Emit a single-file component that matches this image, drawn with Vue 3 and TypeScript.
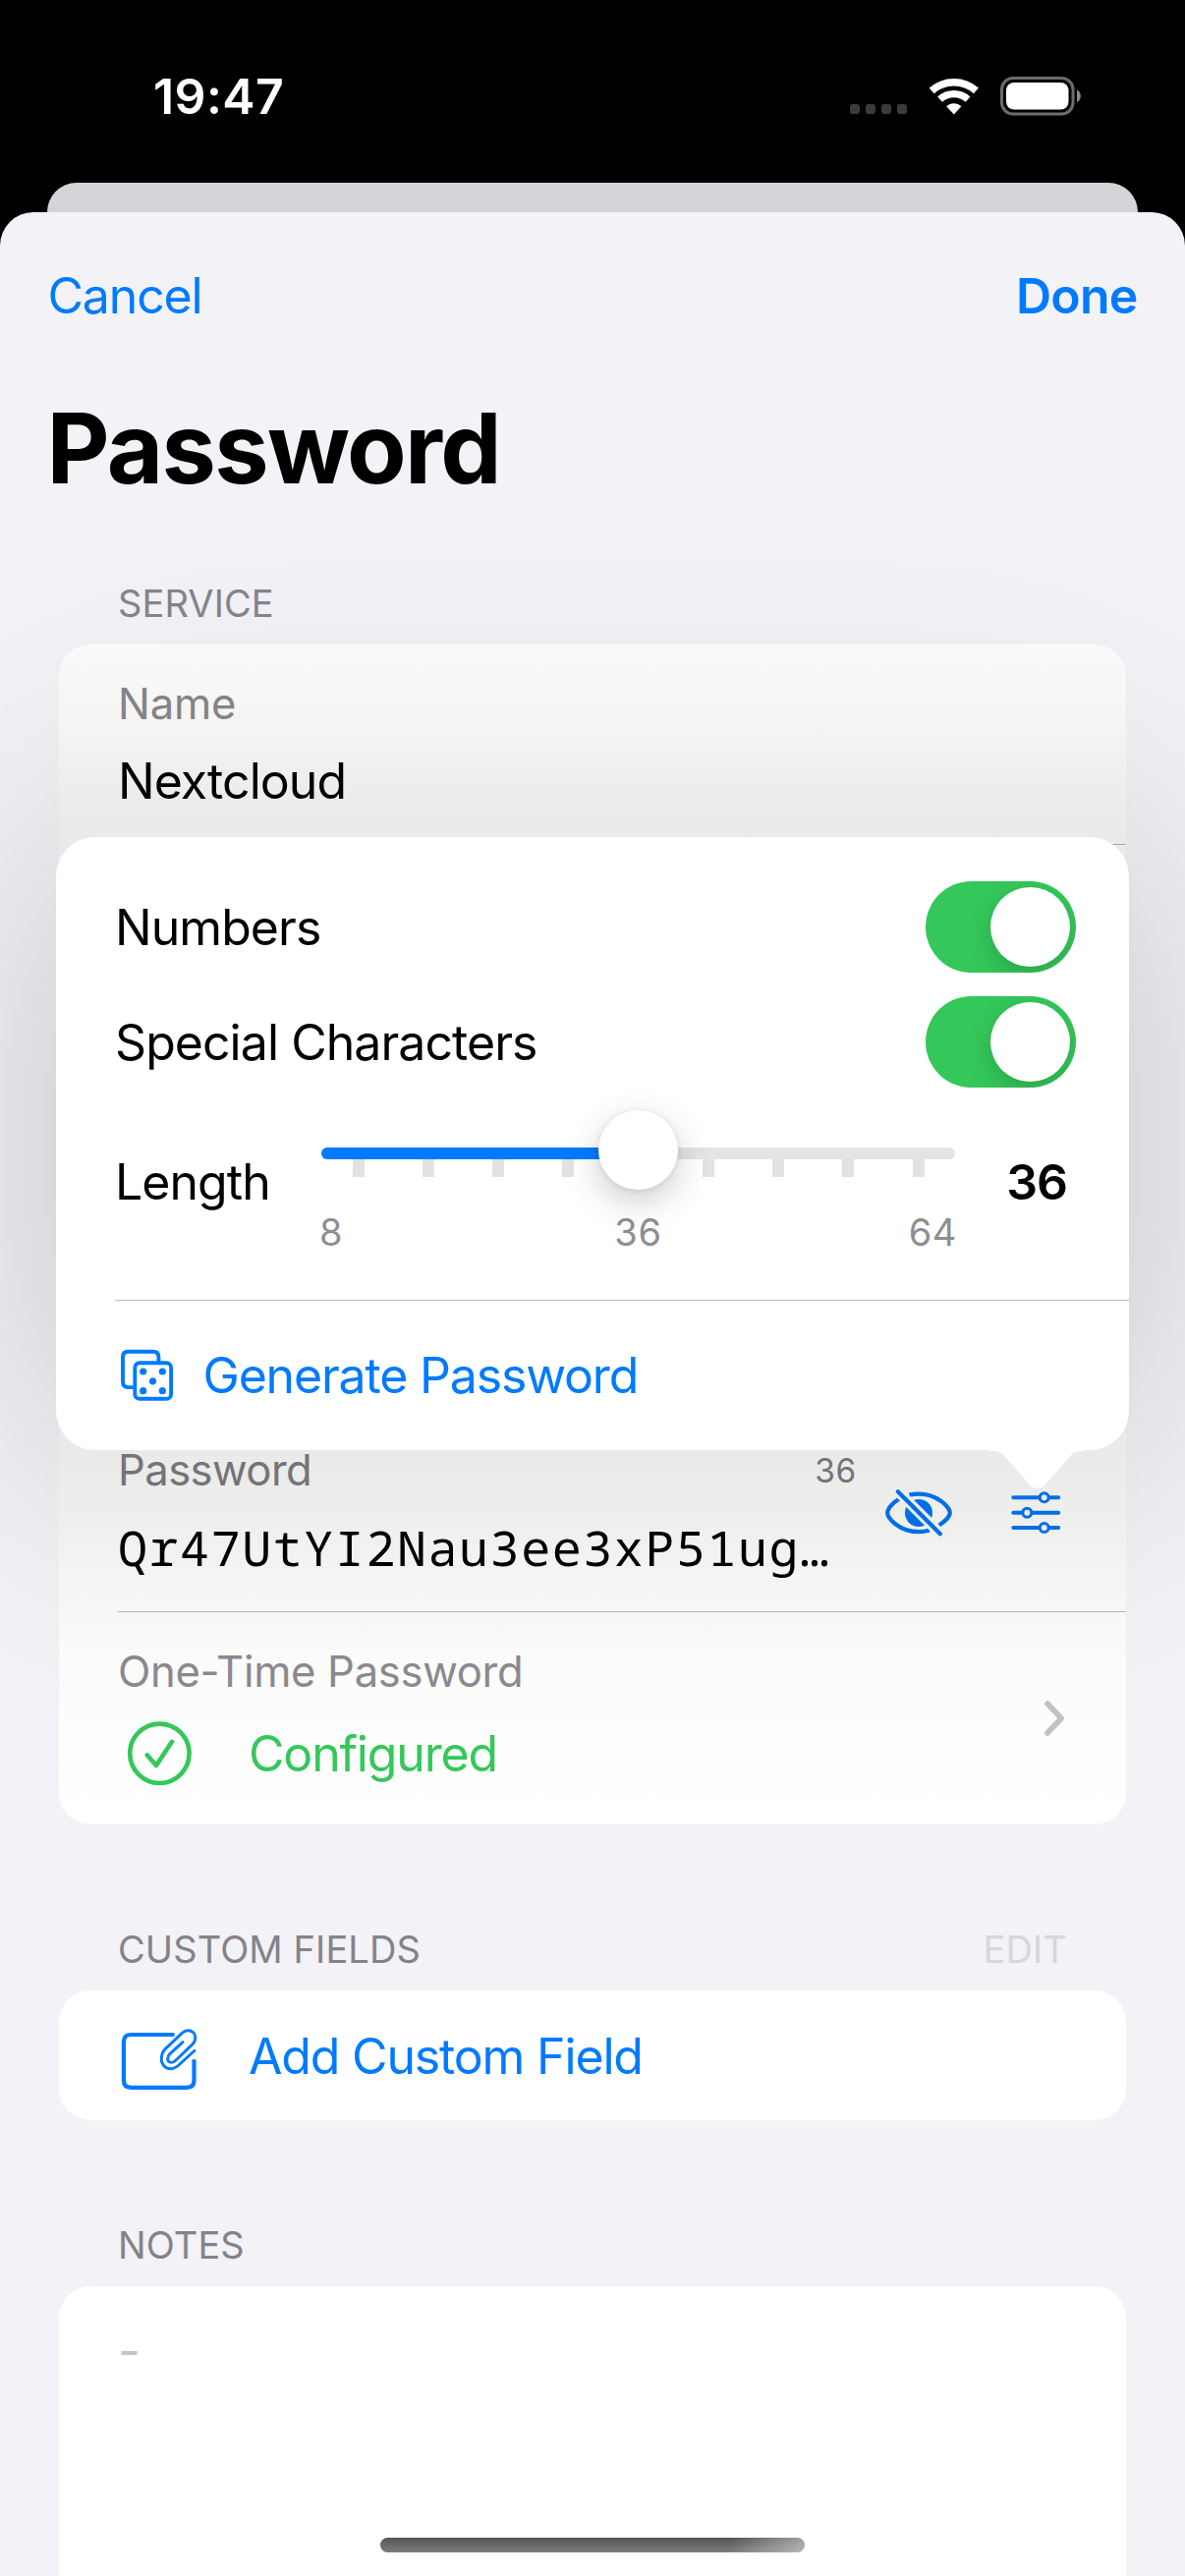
<script setup lang="ts">
import { ref } from 'vue'

const time = '19:47'
const minLength = 8
const maxLength = 64
const length = ref(36)
const options = ['Numbers', 'Special Characters']
const ticks = [32, 103, 174, 245, 388, 459, 530, 602]
const signalDots = [3, 19, 35, 51]
const pips = [
  [28.7, 24],
  [48.3, 24],
  [38.5, 33.8],
  [28.7, 43.7],
  [48.3, 43.7],
]
</script>

<template>
  <div class="screen">
    <header class="status">
      <span class="clock">{{ time }}</span>
      <svg width="240" height="40" viewBox="0 0 240 40">
        <rect v-for="x in signalDots" :key="x" :x="x" y="28" width="10" height="10" rx="3" fill="#3b3b3b" />
        <g fill="none" stroke="#fff">
          <path d="M86.2 14.4A34 34 0 0 1 131.4 14.4" stroke-width="7.6" />
          <path d="M94.6 23.2A21 21 0 0 1 123 23.2" stroke-width="7.2" />
        </g>
        <path d="M108.8 38.4L101.2 30.2C105.4 26.2 112.2 26.2 116.4 30.2Z" fill="#fff" />
        <rect x="157.5" y="1.5" width="72.5" height="36.5" rx="11.5" fill="none" stroke="#6c6c6c" stroke-width="3" />
        <rect x="162" y="6" width="63.5" height="27.5" rx="8" fill="#fff" />
        <path d="M234 13.5C239 15.5 239 24 234 26Z" fill="#8a8a8a" />
      </svg>
    </header>
    <div class="sheet-behind"></div>

    <main class="sheet">
      <div class="shade"></div>
      <nav class="nav">
        <span class="cancel">Cancel</span>
        <span class="done">Done</span>
      </nav>
      <h1 class="title">Password</h1>

      <div class="head head-first"><span>SERVICE</span></div>
      <section class="card service">
        <div class="row name-row">
          <span class="label l-name">Name</span>
          <span class="value v-name">Nextcloud</span>
        </div>
        <div class="covered"></div>
        <div class="row pass-row">
          <div class="pass-main">
            <div class="pass-top">
              <span class="label l-pass">Password</span>
              <span class="count">{{ length }}</span>
            </div>
            <span class="mono">Qr47UtYI2Nau3ee3xP51ug…</span>
          </div>
          <svg class="eye" width="76" height="52" viewBox="0 0 76 52">
            <g fill="none" stroke="#006fe6" stroke-width="4.2">
              <path d="M22.6 9.6C11.5 14.2 6.2 22 6.2 26C6.2 31 18 45.2 38 45.2C42 45.2 45.6 44.6 49 43.6" />
              <path d="M28.4 7.6C31.4 6.9 34.6 6.6 38 6.6C58 6.6 69.8 21 69.8 26C69.8 29 65.6 34 58.8 38.4" />
            </g>
            <circle cx="38" cy="26" r="14" fill="#006fe6" />
            <path d="M13.4 0.6L62.8 50" stroke="#eeeeed" stroke-width="10.6" />
            <path d="M16.8 4.2L59.8 47.2" stroke="#006fe6" stroke-width="4.2" stroke-linecap="round" />
          </svg>
          <svg class="tuner" width="54" height="44" viewBox="0 0 54 44" fill="none" stroke="#006fe6" stroke-linecap="round">
            <path d="M4.3 6.3H50.2M4.3 21.7H50.2M4.3 37H50.2" stroke-width="4" />
            <g fill="#ededec" stroke-width="3.1">
              <circle cx="35.7" cy="6.3" r="4.5" />
              <circle cx="18.3" cy="21.7" r="4.5" />
              <circle cx="35.7" cy="37" r="4.5" />
            </g>
          </svg>
        </div>
        <div class="row otp-row">
          <div class="otp-main">
            <span class="label l-otp">One-Time Password</span>
            <div class="otp-state">
              <svg width="66" height="66" viewBox="0 0 66 66" fill="none" stroke="#34c759" stroke-width="4.6" stroke-linecap="round" stroke-linejoin="round">
                <circle cx="33.4" cy="32.8" r="30.2" />
                <path d="M20.8 34.4L30 45L46 20.8" />
              </svg>
              <span class="action">Configured</span>
            </div>
          </div>
          <svg class="chevron" width="22" height="38" viewBox="0 0 22 38" fill="none" stroke="#c2c2c4" stroke-width="5.6" stroke-linecap="round" stroke-linejoin="round">
            <path d="M4 4L18.2 19L4 34" />
          </svg>
        </div>
      </section>

      <div class="head">
        <span>CUSTOM FIELDS</span>
        <span class="edit">EDIT</span>
      </div>
      <section class="card add">
        <svg width="82" height="70" viewBox="0 0 82 70" fill="none" stroke="#007aff" stroke-width="4.2">
          <path d="M57.5 13H13.4Q5.9 13 5.9 20.4V59.6Q5.9 66.9 13.4 66.9H70Q77.5 66.9 77.5 59.6V38.2" />
          <path
            d="M78 29.2L62.7 43.2C60 45.8 57.2 47.6 53.8 47.8C48.6 48 44.3 43.4 44.3 38.2C44.3 34 45.2 30.4 48.4 27.4L65 11.6C67 9.7 69 8.8 71.5 8.8C75.6 8.8 78.8 11.8 78.8 15.8C78.8 18.8 77.8 21 75.8 22.9L59 39C57.4 40.6 56 41.4 54.2 41.4C52 41.4 50.6 39.8 50.6 37.8C50.6 35.8 51.4 34 52.8 32.6L66 20.6"
            stroke-width="2.9"
            stroke-linecap="round"
          />
        </svg>
        <span class="action">Add Custom Field</span>
      </section>

      <div class="head"><span>NOTES</span></div>
      <section class="card notes"><span class="placeholder">-</span></section>

      <div class="popover">
        <div class="options">
          <div v-for="o in options" :key="o" class="option">
            <span class="value">{{ o }}</span>
            <span class="toggle"><i></i></span>
          </div>
        </div>
        <div class="length-row">
          <span class="value t-length">Length</span>
          <div class="slider">
            <div class="track">
              <div class="fill"></div>
              <i v-for="t in ticks" :key="t" class="tick" :style="{ left: t + 'px' }"></i>
              <b class="knob"></b>
            </div>
            <div class="scale">
              <span>{{ minLength }}</span><span>{{ length }}</span><span>{{ maxLength }}</span>
            </div>
          </div>
          <span class="current">{{ length }}</span>
        </div>
        <div class="generate">
          <svg width="64" height="56" viewBox="0 0 64 56" fill="none" stroke="#007aff" stroke-width="3.9">
            <path d="M18.6 40.1H13.4Q8 40.1 8 34.6V9.2Q8 3.7 13.4 3.7H39Q44.4 3.7 44.4 9.2V14" />
            <rect x="20.3" y="15.3" width="36.8" height="36.4" rx="4.8" />
            <circle v-for="([x, y], i) in pips" :key="i" :cx="x" :cy="y" r="3.6" fill="#007aff" stroke="none" />
          </svg>
          <span class="action">Generate Password</span>
        </div>
        <svg class="arrow" width="100" height="40" viewBox="0 0 100 40">
          <path d="M0 0V1H2C10 1 12 1.5 16 5.7L42.4 35.7C46 39.7 53.4 39.7 57 35.7L83.4 5.7C87 1.8 90 1 98 1V0Z" fill="#fff" />
        </svg>
      </div>
    </main>
    <div class="home"></div>
  </div>
</template>

<style>
html,
body {
  margin: 0;
  background: #000;
}
</style>

<style scoped>
.screen {
  position: relative;
  width: 1206px;
  height: 2622px;
  overflow: hidden;
  background: #000;
  color: #000;
  font-family: Inter, 'Liberation Sans', sans-serif;
  font-size: 50px;
  line-height: 60px;
  white-space: nowrap;
}
.status {
  box-sizing: border-box;
  height: 186px;
  padding: 10px 104px 0 156px;
  display: flex;
  align-items: center;
  justify-content: space-between;
  color: #fff;
}
.clock {
  font-weight: 600;
  letter-spacing: 0.41px;
}
.sheet-behind {
  height: 30px;
  margin: 0 48px;
  border-radius: 31px 31px 0 0;
  background: #d5d4d9;
}
.sheet {
  position: relative;
  height: 2406px;
  overflow: hidden;
  border-radius: 34px 34px 0 0;
  background: #f2f2f7;
  display: flex;
  flex-direction: column;
}
/* Wide, soft shadow of the popover: the two gradients multiply into a blurred rectangle. */
.shade {
  position: absolute;
  left: 0;
  top: 186px;
  width: 1206px;
  height: 1524px;
  background: linear-gradient(
    to right,
    rgba(0, 0, 0, 0.069) 0,
    rgba(0, 0, 0, 0.1) 57px,
    rgba(0, 0, 0, 0.138) 130px,
    rgba(0, 0, 0, 0.168) 200px,
    rgba(0, 0, 0, 0.19) 300px,
    rgba(0, 0, 0, 0.2) 450px,
    rgba(0, 0, 0, 0.2) 756px,
    rgba(0, 0, 0, 0.19) 906px,
    rgba(0, 0, 0, 0.168) 1006px,
    rgba(0, 0, 0, 0.138) 1076px,
    rgba(0, 0, 0, 0.1) 1149px,
    rgba(0, 0, 0, 0.069) 1206px
  );
  -webkit-mask-image: linear-gradient(
    rgba(0, 0, 0, 0) 0,
    rgba(0, 0, 0, 0.005) 75px,
    rgba(0, 0, 0, 0.019) 150px,
    rgba(0, 0, 0, 0.06) 225px,
    rgba(0, 0, 0, 0.15) 300px,
    rgba(0, 0, 0, 0.302) 375px,
    rgba(0, 0, 0, 0.5) 450px,
    rgba(0, 0, 0, 0.698) 525px,
    rgba(0, 0, 0, 0.849) 600px,
    rgba(0, 0, 0, 0.935) 675px,
    rgba(0, 0, 0, 0.968) 762px,
    rgba(0, 0, 0, 0.935) 849px,
    rgba(0, 0, 0, 0.849) 924px,
    rgba(0, 0, 0, 0.698) 999px,
    rgba(0, 0, 0, 0.5) 1074px,
    rgba(0, 0, 0, 0.302) 1149px,
    rgba(0, 0, 0, 0.15) 1224px,
    rgba(0, 0, 0, 0.06) 1299px,
    rgba(0, 0, 0, 0.019) 1374px,
    rgba(0, 0, 0, 0.005) 1449px,
    rgba(0, 0, 0, 0) 1524px
  );
}
.value {
  letter-spacing: -0.95px;
}
.action {
  letter-spacing: -1.17px;
}
.nav {
  position: relative;
  height: 170px;
  padding: 0 48.5px;
  display: flex;
  align-items: center;
  justify-content: space-between;
  color: #007aff;
}
.cancel {
  letter-spacing: -1.17px;
}
.done {
  font-weight: 600;
  letter-spacing: -0.8px;
}
.title {
  position: relative;
  margin: 10px 0 0 47.5px;
  font-size: 99px;
  line-height: 120px;
  font-weight: 700;
  letter-spacing: -1.7px;
}
.head {
  position: relative;
  height: 84px;
  margin: 85px 120px 0;
  display: flex;
  align-items: center;
  justify-content: space-between;
  font-size: 38px;
  letter-spacing: 0.1px;
  color: #848388;
}
.head-first {
  margin-top: 56px;
}
.edit {
  color: #d7d6dc;
}
.card {
  position: relative;
  box-sizing: border-box;
  margin: 0 60px;
  border-radius: 32px;
  background: #fff;
}
.service {
  height: 1201px;
  display: flex;
  flex-direction: column;
  background: linear-gradient(#fafafa 0, #f5f5f3 71px, #f0f0ef 121px, #edecea 157px, #eaeae8 196px, #eaeae8 820px, #eeeeed 884px, #f3f3f2 938px, #f7f7f6 984px, #fbfbfa 1034px, #fdfdfd 1104px, #fff 1201px);
}
.row {
  box-sizing: border-box;
  margin-left: 60px;
}
.name-row {
  height: 204px;
  padding-top: 31px;
  display: flex;
  flex-direction: column;
  border-bottom: 1px solid #a5a5a8;
}
.label {
  font-size: 43.6px;
  color: #848387;
}
.l-name {
  letter-spacing: -0.17px;
}
.v-name {
  margin-top: 18px;
}
.covered {
  height: 600px;
}
.pass-row {
  height: 181px;
  display: flex;
  border-bottom: 1px solid #b5b5b7;
}
.pass-main {
  width: 752px;
  display: flex;
  flex-direction: column;
}
.pass-top {
  height: 74px;
  display: flex;
  align-items: center;
  justify-content: space-between;
}
.l-pass {
  color: #747477;
  letter-spacing: -0.58px;
}
.count {
  font-size: 33.5px;
  letter-spacing: 0.6px;
  color: #747477;
}
.mono {
  font-family: 'Noto Sans Mono', 'Liberation Mono', monospace;
  font-size: 50px;
  line-height: 60px;
  letter-spacing: 1.55px;
  margin-top: 11px;
}
.eye {
  margin: 54px 0 0 25px;
}
.tuner {
  margin: 58px 0 0 54px;
}
.otp-row {
  height: 216px;
  display: flex;
  justify-content: space-between;
}
.otp-main {
  padding-top: 31px;
}
.l-otp {
  display: block;
  letter-spacing: -0.31px;
  color: #8a898e;
}
.otp-state {
  margin: 20px 0 0 9px;
  display: flex;
  align-items: center;
  gap: 58px;
  color: #34c759;
}
.chevron {
  margin: 89px 62px 0 0;
}
.add {
  height: 132px;
  padding: 1px 60px 0;
  display: flex;
  align-items: center;
  gap: 51px;
  color: #007aff;
}
.notes {
  flex: 1;
  border-radius: 32px 32px 0 0;
  padding: 36px 60px;
}
.placeholder {
  color: #c5c5c7;
}
.popover {
  position: absolute;
  left: 57px;
  top: 636px;
  width: 1092px;
  height: 624px;
  border-radius: 40px;
  background: #fff;
}
.options {
  padding: 45px 54px 0 60px;
  display: flex;
  flex-direction: column;
  gap: 24px;
}
.option {
  height: 93px;
  display: flex;
  align-items: center;
  justify-content: space-between;
}
.toggle {
  box-sizing: border-box;
  width: 153px;
  height: 93px;
  padding: 6px;
  border-radius: 47px;
  background: #34c759;
  display: flex;
  justify-content: flex-end;
  overflow: hidden;
}
.toggle i {
  width: 81px;
  height: 81px;
  border-radius: 50%;
  background: #fff;
  box-shadow: 0 9px 24px rgba(0, 0, 0, 0.17);
}
.length-row {
  height: 216px;
  padding: 0 63px 0 60px;
  display: flex;
}
.t-length {
  width: 210px;
  padding-top: 66px;
}
.slider {
  width: 645px;
  padding-top: 61px;
}
.track {
  position: relative;
  height: 12px;
  border-radius: 6px;
  background: #e4e4e6;
}
.fill {
  width: 322px;
  height: 12px;
  border-radius: 6px 0 0 6px;
  background: #007aff;
}
.tick {
  position: absolute;
  top: 12px;
  width: 12px;
  height: 18px;
  background: #e2e2e2;
}
.knob {
  position: absolute;
  left: 282px;
  top: -38px;
  width: 81px;
  height: 81px;
  border-radius: 50%;
  background: #fff;
  box-shadow: 0 1px 6px rgba(0, 0, 0, 0.1), 0 12px 36px rgba(0, 0, 0, 0.2);
}
.scale {
  margin: 44px -2px 0;
  display: grid;
  grid-template-columns: repeat(3, 1fr);
  font-size: 38px;
  letter-spacing: 0.6px;
  color: #8e8e93;
}
.scale span:nth-child(2) {
  text-align: center;
}
.scale span:nth-child(3) {
  text-align: right;
}
.current {
  margin-left: auto;
  padding-top: 66px;
  font-weight: 600;
  letter-spacing: -1px;
}
.generate {
  box-sizing: border-box;
  height: 153px;
  margin-left: 60px;
  border-top: 1px solid #bcbcbe;
  display: flex;
  align-items: center;
  gap: 25.5px;
  color: #007aff;
}
.arrow {
  position: absolute;
  left: 949px;
  top: 623.5px;
}
.home {
  position: absolute;
  left: 387px;
  top: 2583px;
  width: 432px;
  height: 15px;
  border-radius: 8px;
  background: linear-gradient(100deg, transparent 82%, rgba(255, 255, 255, 0.45)), linear-gradient(#545454, #7c7c7c);
}
</style>
